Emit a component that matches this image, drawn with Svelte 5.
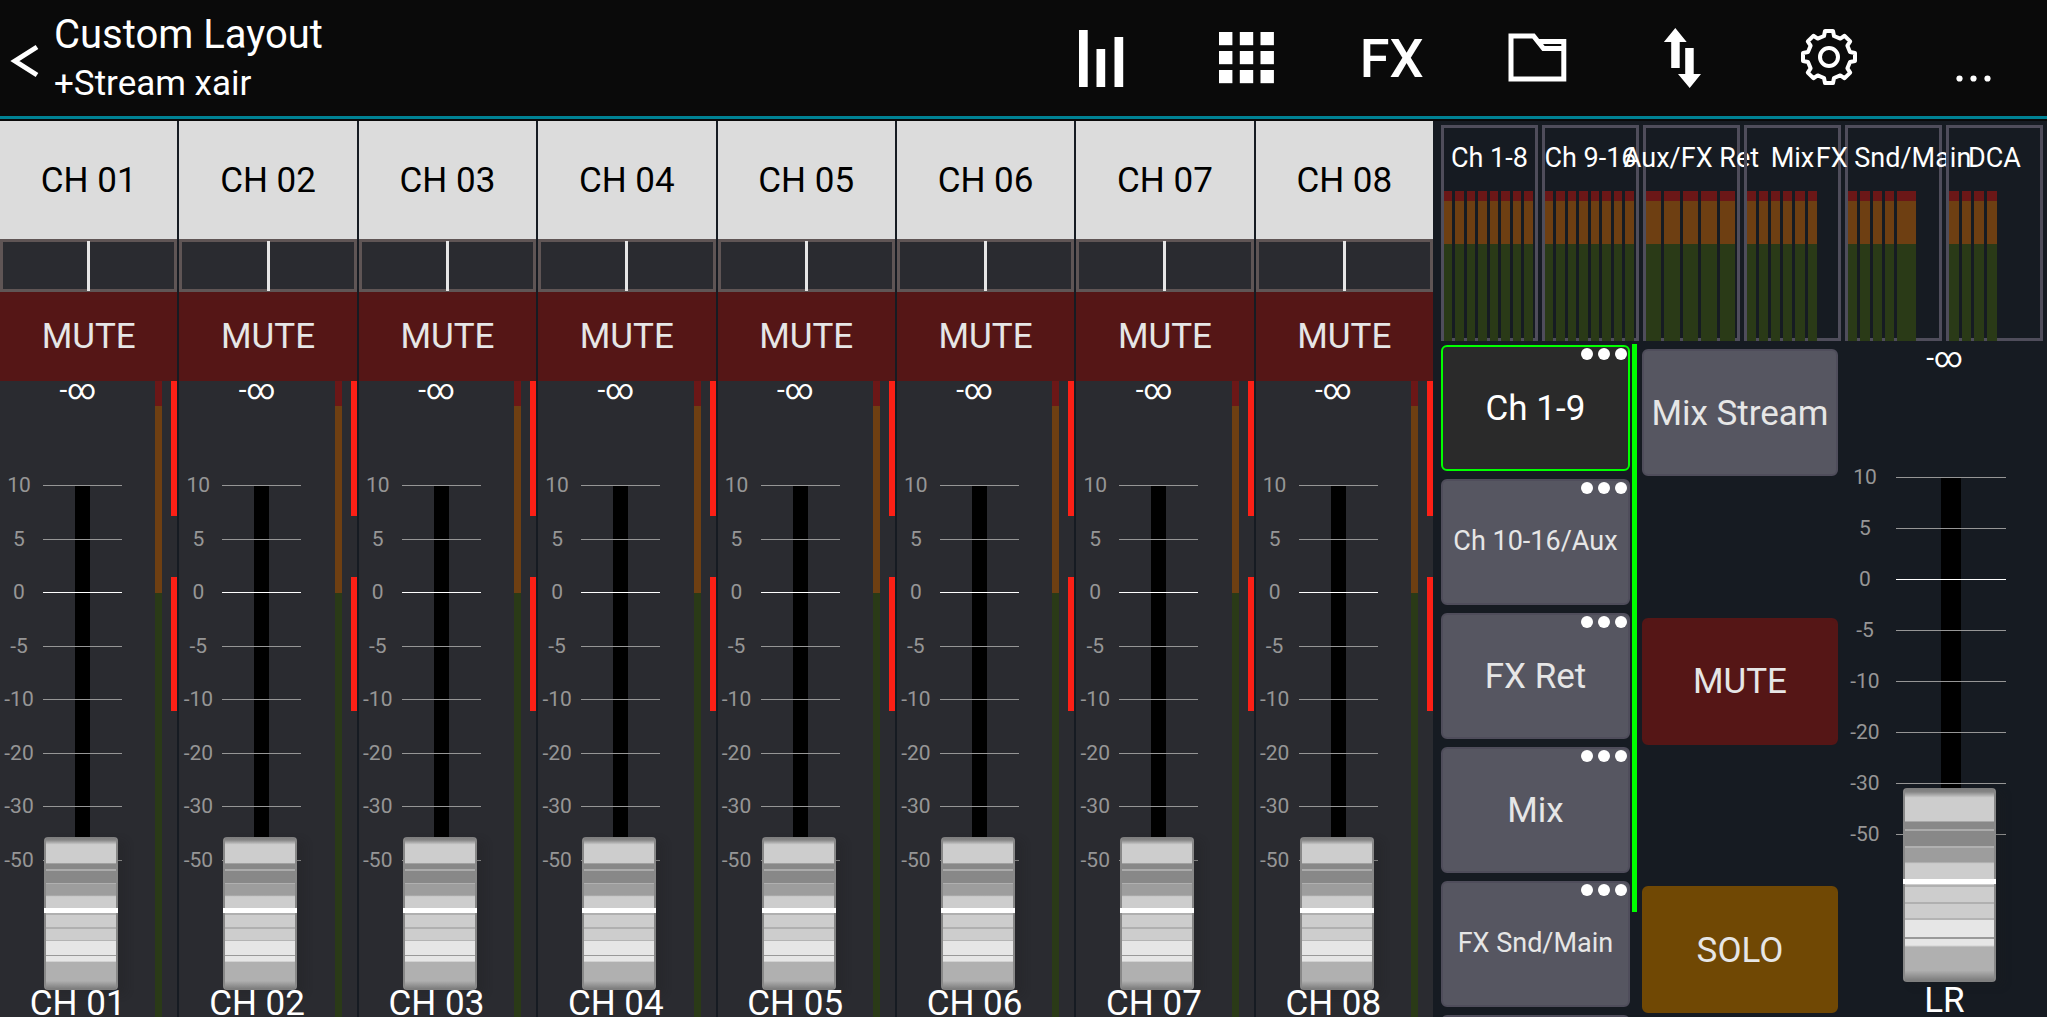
<script>
  const marks = ['10', '5', '0', '-5', '-10', '-20', '-30', '-50'];

  let channels = ['01', '02', '03', '04', '05', '06', '07', '08'].map(n => ({
    name: `CH ${n}`,
    pan: 50,
    level: 0,
    muted: false
  }));

  // bars: relative widths, rest: free space after the last bar
  const meterGroups = [
    { name: 'Ch 1-8', bars: [1, 1, 1, 1, 1, 1, 1, 1], rest: 0 },
    { name: 'Ch 9-16', bars: [1, 1, 1, 1, 1, 1, 1, 1], rest: 0 },
    { name: 'Aux/FX Ret', bars: [1, 1, 1, 1, 1], rest: 0 },
    { name: 'Mix', bars: [1, 1, 1, 1, 1, 1], rest: 1.8 },
    { name: 'FX Snd/Main', bars: [1, 1, 1, 1, 2], rest: 2 },
    { name: 'DCA', bars: [1, 1, 1, 1], rest: 4 }
  ];

  const layers = [
    { name: 'Ch 1-9' },
    { name: 'Ch 10-16/Aux', small: true },
    { name: 'FX Ret' },
    { name: 'Mix' },
    { name: 'FX Snd/Main', small: true }
  ];

  let activeLayer = 'Ch 1-9';
  let main = { level: 0, muted: false, solo: false };

  // outline of an eight-toothed gear centred on cx, cy
  function gearPath(cx, cy) {
    const corners = [[-5, 21], [-4, 26], [4, 26], [5, 21]];
    const points = [];
    for (let i = 0; i < 8; i++) {
      const a = (i * Math.PI) / 4;
      corners.forEach(([x, y]) => {
        const px = cx + x * Math.cos(a) + y * Math.sin(a);
        const py = cy + x * Math.sin(a) - y * Math.cos(a);
        points.push(`${px.toFixed(1)} ${py.toFixed(1)}`);
      });
    }
    return `M${points.join('L')}Z`;
  }
</script>

{#snippet dots()}
  <svg class="dots" viewBox="0 0 46 12" aria-hidden="true">
    <circle cx="6" cy="6" r="6" />
    <circle cx="23" cy="6" r="6" />
    <circle cx="40" cy="6" r="6" />
  </svg>
{/snippet}

{#snippet ticks()}
  <ul class="ticks">
    {#each marks as mark}
      <li class:unity={mark === '0'}><span>{mark}</span><i></i></li>
    {/each}
  </ul>
{/snippet}

<div class="app">
  <header>
    <button class="back" aria-label="Back">
      <svg viewBox="0 0 30 40"><path d="M27 6L5 20L27 34" /></svg>
    </button>
    <div class="titles">
      <h1>Custom Layout</h1>
      <p>+Stream xair</p>
    </div>
    <nav>
      <button aria-label="Mixer">
        <svg viewBox="0 0 70 70">
          <path d="M14 7h8.7v57H14zM31.5 26h8.7v38h-8.7zM49.5 14h8.7v50h-8.7z" />
        </svg>
      </button>
      <button aria-label="Layouts">
        <svg viewBox="0 0 70 70">
          {#each [9, 28, 47] as y}
            {#each [8, 28.8, 49.5] as x}
              <rect {x} {y} width="13.4" height="13.2" />
            {/each}
          {/each}
        </svg>
      </button>
      <button class="fx">FX</button>
      <button aria-label="Files">
        <svg class="line" viewBox="0 0 70 70">
          <path d="M9 13H31.5L41.5 25.5H61.5M34.5 18.5H61.8V56H9V10.5" />
        </svg>
      </button>
      <button aria-label="Sends">
        <svg viewBox="0 0 70 70">
          <path d="M27.3 5L38.7 19H31.7V45H23.2V19H15.9ZM37.2 25H45.7V51H53L41.7 65L30 51H37.2Z" />
        </svg>
      </button>
      <button aria-label="Settings">
        <svg class="line gear" viewBox="0 0 70 70">
          <path d={gearPath(35, 34)} />
          <circle cx="35" cy="34" r="9" />
        </svg>
      </button>
      <button aria-label="More">
        <svg viewBox="0 0 70 70">
          <circle cx="20.5" cy="55.5" r="3.1" />
          <circle cx="34.5" cy="55.5" r="3.1" />
          <circle cx="48.5" cy="55.5" r="3.1" />
        </svg>
      </button>
    </nav>
  </header>

  <main>
    <div class="strips">
      {#each channels as channel}
        <section class="strip">
          <button class="name">{channel.name}</button>
          <input class="pan" type="range" min="0" max="100" aria-label="{channel.name} pan" bind:value={channel.pan} />
          <button class="mute" class:on={channel.muted} on:click={() => (channel.muted = !channel.muted)}>MUTE</button>
          <div class="strip-body">
            <div class="fader-column">
              <div class="readout">-∞</div>
              <div class="scale">
                <div class="groove"></div>
                {@render ticks()}
                <input class="fader" type="range" min="0" max="100" aria-label="{channel.name} level" bind:value={channel.level} />
              </div>
              <div class="label">{channel.name}</div>
            </div>
            <div class="meter"></div>
            <div class="dynamics"></div>
          </div>
        </section>
      {/each}
    </div>

    <aside>
      <div class="overview">
        {#each meterGroups as group}
          <div class="group">
            <span class="group-name">{group.name}</span>
            <div class="bars">
              {#each group.bars as size}
                <div class="bar" style="flex-grow: {size}"></div>
              {/each}
              {#if group.rest}
                <div style="flex-grow: {group.rest}"></div>
              {/if}
            </div>
          </div>
        {/each}
      </div>

      <div class="panel">
        <div class="layers">
          {#each layers as layer}
            <button
              class="tile"
              class:small={layer.small}
              class:active={activeLayer === layer.name}
              on:click={() => (activeLayer = layer.name)}
            >
              {layer.name}
              {@render dots()}
            </button>
          {/each}
          <button class="tile" aria-label="Next layer"></button>
        </div>
        <div class="scrollbar"></div>
        <div class="actions">
          <button class="tile">Mix Stream</button>
          <button class="tile red" class:on={main.muted} on:click={() => (main.muted = !main.muted)}>MUTE</button>
          <button class="tile amber" class:on={main.solo} on:click={() => (main.solo = !main.solo)}>SOLO</button>
        </div>
        <div class="fader-column main-fader">
          <div class="readout">-∞</div>
          <div class="scale">
            <div class="groove"></div>
            {@render ticks()}
            <input class="fader" type="range" min="0" max="100" aria-label="LR level" bind:value={main.level} />
          </div>
          <div class="label">LR</div>
        </div>
      </div>
    </aside>
  </main>
</div>

<style>
  :global(body) {
    margin: 0;
    background: #0a0a0a;
  }

  .app {
    display: flex;
    flex-direction: column;
    height: 100vh;
    overflow: hidden;
    background: #0a0a0a;
    color: #fff;
    font-family: Roboto, 'Liberation Sans', sans-serif;
    font-size: 35px;
  }

  button {
    padding: 0;
    border: none;
    background: none;
    color: inherit;
    font: inherit;
    cursor: pointer;
  }

  header {
    display: flex;
    height: 116px;
    flex: none;
    border-bottom: 3px solid #008294;
    margin-bottom: 2px;
  }

  .back {
    width: 54px;
    padding: 6px 0 0 10px;
    text-align: left;
  }

  .back svg {
    display: block;
    width: 30px;
    height: 40px;
    fill: none;
    stroke: #fff;
    stroke-width: 5;
  }

  .titles {
    flex: 1;
    padding-top: 11px;
    white-space: nowrap;
  }

  h1 {
    margin: 0 0 5px;
    font-size: 40px;
    line-height: 47px;
    font-weight: 400;
  }

  .titles p {
    margin: 0;
    line-height: 41px;
  }

  nav {
    display: flex;
    flex: 0 0 49.8%;
  }

  nav button {
    display: flex;
    flex: 1;
    align-items: center;
    justify-content: center;
  }

  nav svg {
    width: 70px;
    height: 70px;
    fill: #fff;
  }

  nav .line {
    fill: none;
    stroke: #fff;
    stroke-width: 5;
  }

  nav .gear {
    stroke-width: 4;
    stroke-linejoin: round;
  }

  .fx {
    font-size: 54px;
    font-weight: 500;
  }

  main {
    display: flex;
    flex: 1;
    min-height: 0;
    background: #161b22;
  }

  .strips {
    display: flex;
    flex: 0 0 70.1%;
  }

  .strip {
    display: flex;
    flex: 1;
    flex-direction: column;
    min-width: 0;
    border-right: 2px solid #161b22;
    background: #2a2b30;
  }

  .name {
    height: 118px;
    flex: none;
    background: #dcdcdc;
    color: #000;
  }

  .pan {
    width: 100%;
    height: 53px;
    flex: none;
    margin: 0;
    appearance: none;
    background: #2a2b30;
    box-shadow: inset 0 0 0 3px #5f5555;
  }

  .pan::-webkit-slider-thumb {
    appearance: none;
    width: 3px;
    height: 50px;
    background: #e6e6e6;
  }

  .mute {
    height: 89px;
    flex: none;
    background: #551616;
    color: #e6e6e6;
  }

  .mute.on,
  .red.on {
    background: #e02020;
  }

  .strip-body {
    display: flex;
    flex: 1;
    min-height: 0;
  }

  .fader-column {
    display: flex;
    flex: 1;
    flex-direction: column;
    min-width: 0;
  }

  .readout {
    height: 104px;
    flex: none;
    font-size: 28px;
    line-height: 18px;
    text-align: center;
  }

  .scale {
    display: grid;
    flex: 1;
    grid-template-columns: 38px 79px;
    grid-template-rows: minmax(0, 1fr);
    column-gap: 5px;
    min-height: 0;
  }

  .groove {
    grid-area: 1 / 2;
    justify-self: center;
    width: 15px;
    background: #000;
  }

  .ticks {
    display: flex;
    grid-area: 1 / 1 / 2 / 3;
    flex-direction: column;
    justify-content: space-between;
    margin: 0 0 129px;
    padding: 0;
    list-style: none;
    color: #969696;
    font-size: 21px;
  }

  .ticks li {
    display: grid;
    grid-template-columns: 38px 79px;
    column-gap: 5px;
    height: 1px;
    line-height: 1px;
    text-align: center;
  }

  .ticks i {
    background: #969696;
  }

  .unity i {
    background: #fff;
  }

  .fader {
    grid-area: 1 / 2;
    width: auto;
    height: 100%;
    margin: 0 3px 0 0;
    appearance: none;
    background: none;
    writing-mode: vertical-lr;
    direction: rtl;
  }

  .fader::-webkit-slider-thumb {
    appearance: none;
    box-sizing: border-box;
    width: 74px;
    height: 153px;
    border-radius: 4px;
    background:
      linear-gradient(#fff, #fff) 0 48% / 100% 5px no-repeat,
      linear-gradient(to right, #888 2px, transparent 2px calc(100% - 2px), #888 calc(100% - 2px)),
      linear-gradient(
        #7d7d7d 0, #868686 2%, #cdcdcd 5%, #cdcdcd 17%,
        #888 17.5% 21%, #ababab 21% 22%,
        #888 22% 30%, #b0b0b0 30% 31%,
        #9d9d9d 31% 38%, #cdcdcd 39% 50%,
        #b0b0b0 50% 51%, #cdcdcd 51% 59%,
        #b0b0b0 59% 60%, #cdcdcd 60% 67%,
        #b4b4b4 67% 68%, #e6e6e6 68% 77%,
        #999 77% 78%, #e6e6e6 78% 81%,
        #b0b0b0 82% 94%, #7f7f7f 99%
      );
    box-shadow: 8px 4px 8px rgba(32, 28, 30, 0.2);
  }

  .label {
    height: 27px;
    flex: none;
    line-height: 27px;
    text-align: center;
  }

  .meter {
    width: 7px;
    margin-right: 9px;
    background: linear-gradient(#6b1717 4%, #6e3f12 4% 33.3%, #2a3a17 33.3%);
  }

  .dynamics {
    width: 6px;
    background: linear-gradient(
      #fc2016 21.2%,
      transparent 21.2% 30.8%,
      #fc2016 30.8% 51.9%,
      transparent 51.9%
    );
  }

  aside {
    display: flex;
    flex: 1;
    flex-direction: column;
    min-width: 0;
  }

  .overview {
    display: flex;
    height: 216px;
    flex: none;
    gap: 4px;
    padding: 4px 4px 0 6px;
  }

  .group {
    display: grid;
    flex: 1;
    grid-template-rows: 66px 150px;
    min-width: 0;
    padding: 0 3px;
    box-shadow: inset 0 0 0 3px #4f4d5b;
  }

  .group-name {
    justify-self: center;
    width: max-content;
    margin: 0 -60px;
    font-size: 27px;
    line-height: 66px;
    white-space: nowrap;
  }

  .bars {
    display: flex;
    gap: 3px;
    padding-right: 2px;
  }

  .bar {
    background: linear-gradient(#6b1717 10px, #6e3f12 10px 53px, #2a3a17 53px);
  }

  .bars div {
    flex-basis: 0;
  }

  .panel {
    display: flex;
    flex: 1;
    min-height: 0;
    padding-left: 6px;
  }

  .layers {
    display: flex;
    flex: 189;
    flex-direction: column;
    gap: 8px;
    margin-right: 2px;
    padding-top: 4px;
    overflow: hidden;
  }

  .tile {
    position: relative;
    box-sizing: border-box;
    height: 126px;
    flex: none;
    border: 2px solid #4f4d5b;
    border-radius: 6px;
    background: #565661;
    color: #e6e6e6;
    white-space: nowrap;
  }

  .tile.small {
    padding-bottom: 3px;
    font-size: 27px;
  }

  .tile.active {
    border-color: #0f0;
    background: #2a2a2a;
    color: #fff;
  }

  .tile.red {
    border-color: #551616;
    background: #551616;
  }

  .tile.amber {
    border-color: #704804;
    background: #704804;
  }

  .tile.red.on {
    background: #e02020;
  }

  .tile.amber.on {
    background: #f0a010;
  }

  .dots {
    position: absolute;
    top: 1px;
    right: 1px;
    width: 46px;
    height: 12px;
    fill: #fff;
  }

  .scrollbar {
    width: 5px;
    height: 84%;
    margin: 3px 5px 0 0;
    background: #0f0;
  }

  .actions {
    display: flex;
    flex: 196;
    flex-direction: column;
    justify-content: space-between;
    padding: 8px 0 4px;
  }

  .actions .tile {
    height: 127px;
    padding-top: 1px;
  }

  .main-fader {
    flex: 209;
  }

  .main-fader .readout {
    height: 128px;
    padding: 8px 0 0 4px;
  }

  .main-fader .scale,
  .main-fader .ticks li {
    grid-template-columns: 54px 110px;
    column-gap: 4px;
  }

  .main-fader .groove {
    width: 20px;
  }

  .main-fader .ticks {
    margin-bottom: 147px;
  }

  .main-fader .fader::-webkit-slider-thumb {
    width: 93px;
    height: 194px;
  }

  .main-fader .label {
    height: 35px;
    padding-left: 4px;
    line-height: 37px;
  }
</style>
